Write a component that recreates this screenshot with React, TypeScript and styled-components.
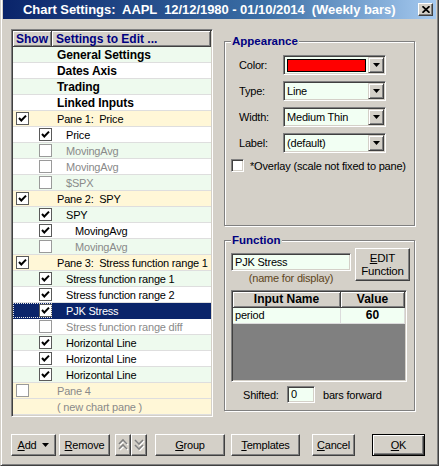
import React from "react";
import styled, { createGlobalStyle, css } from "styled-components";

const FACE = "#d4d0c8";
const SHADOW = "#808080";
const DARK = "#404040";
const GREEN = "#eefaee";
const YELLOW = "#fff7d7";
const MINT = "#f2fff3";
const NAVY = "#0a246a";

const Global = createGlobalStyle`
  html, body { margin: 0; padding: 0; background: ${FACE}; }
  body { font-family: "Liberation Sans", Arial, sans-serif; font-size: 11px; color: #000; letter-spacing: -0.2px; }
  * { box-sizing: border-box; }
`;

const Window = styled.div`
  width: 439px;
  height: 466px;
  background: ${FACE};
  border-left: 1px solid ${FACE};
  border-right: 1px solid ${DARK};
  border-bottom: 1px solid ${DARK};
  box-shadow: inset 1px 0 0 #fff, inset -1px -1px 0 ${SHADOW};
  padding: 0 2px 2px 2px;
  display: flex;
  flex-direction: column;
  overflow: hidden;
`;

const TitleBar = styled.div`
  height: 19px;
  flex: none;
  display: flex;
  align-items: center;
  padding-left: 20px;
  padding-right: 3px;
  background: linear-gradient(to right, #0a246a 0%, #3a6ea5 60%, #a6caf0 100%);
`;

const TitleText = styled.span`
  color: #fff;
  font-weight: bold;
  font-size: 13px;
  letter-spacing: -0.05px;
  white-space: pre;
`;

const CloseBtn = styled.div`
  margin-left: auto;
  width: 15px;
  height: 13px;
  background: ${FACE};
  border: 1px solid;
  border-color: #fff ${DARK} ${DARK} #fff;
  box-shadow: inset -1px -1px 0 ${SHADOW};
  display: flex;
  align-items: center;
  justify-content: center;
`;

const Body = styled.div`
  display: flex;
  padding: 10px 0 0 8px;
`;

const ListFrame = styled.div`
  width: 202px;
  height: 388px;
  border: 1px solid;
  border-color: ${SHADOW} #fff #fff ${SHADOW};
  box-shadow: inset 1px 1px 0 ${DARK}, inset -1px -1px 0 ${FACE};
  padding: 1px;
  background: #fff;
  display: flex;
  flex-direction: column;
`;

const HeadRow = styled.div`
  display: flex;
  height: 16px;
  flex: none;
  background: ${FACE};
`;

const HeadCell = styled.div<{ $w?: number; $pl: number }>`
  ${(p) => (p.$w ? `width: ${p.$w}px; flex: none;` : "flex: 1;")}
  height: 16px;
  padding-left: ${(p) => p.$pl}px;
  border-right: 1px solid ${DARK};
  border-bottom: 1px solid ${DARK};
  box-shadow: inset 1px 1px 0 #fff, inset -1px -1px 0 ${SHADOW};
  color: #000080;
  font-weight: bold;
  font-size: 12px;
  letter-spacing: 0;
  line-height: 16px;
  white-space: pre;
`;

type Bg = "g" | "w" | "y" | "sel";
const bgColor: Record<Bg, string> = { g: GREEN, w: "#fff", y: YELLOW, sel: NAVY };

const Row = styled.div<{ $bg: Bg }>`
  display: flex;
  height: 16px;
  flex: none;
  background: ${(p) => bgColor[p.$bg]};
  border-bottom: 1px solid ${(p) => (p.$bg === "sel" ? NAVY : "#dedede")};
`;

const ShowCell = styled.div<{ $pl: number; $focus?: boolean }>`
  width: 39px;
  flex: none;
  display: flex;
  align-items: center;
  padding-left: ${(p) => p.$pl}px;
  ${(p) =>
    p.$focus &&
    css`
      outline: 1px dotted #e8e8e8;
      outline-offset: -1px;
    `}
`;

type Kind = "bold" | "pane" | "item" | "sub";
const indent: Record<Kind, number> = { bold: 5, pane: 5, item: 14, sub: 23 };

const Label = styled.div<{ $kind: Kind; $dim?: boolean; $sel?: boolean }>`
  padding-left: ${(p) => indent[p.$kind]}px;
  line-height: 16px;
  white-space: pre;
  font-weight: ${(p) => (p.$kind === "bold" ? "bold" : "normal")};
  font-size: ${(p) => (p.$kind === "bold" ? "12px" : "11px")};
  letter-spacing: ${(p) => (p.$kind === "bold" ? "-0.1px" : "-0.2px")};
  color: ${(p) => (p.$sel ? "#fff" : p.$dim ? "#8a8a8a" : "#000")};
`;

const Box = styled.div<{ $dim?: boolean; $sunken?: boolean }>`
  width: 13px;
  height: 13px;
  flex: none;
  background: #fff;
  display: flex;
  align-items: center;
  justify-content: center;
  ${(p) =>
    p.$sunken
      ? css`
          border: 1px solid;
          border-color: ${SHADOW} #fff #fff ${SHADOW};
          box-shadow: inset 1px 1px 0 ${DARK}, inset -1px -1px 0 ${FACE};
        `
      : css`
          border: 1px solid ${p.$dim ? "#9a9a9a" : "#5a5a5a"};
        `}
`;

const Check = ({ checked, dim, sunken }: { checked?: boolean; dim?: boolean; sunken?: boolean }) => (
  <Box $dim={dim} $sunken={sunken}>
    {checked && (
      <svg width="9" height="9" viewBox="0 0 9 9">
        <polyline points="1,4 3.3,6.5 8,1.6" fill="none" stroke="#000" strokeWidth="2" />
      </svg>
    )}
  </Box>
);

type Item = { label: string; kind: Kind; bg: Bg; checked?: boolean; dim?: boolean; box?: boolean };

const items: Item[] = [
  { label: "General Settings", kind: "bold", bg: "g" },
  { label: "Dates Axis", kind: "bold", bg: "w" },
  { label: "Trading", kind: "bold", bg: "g" },
  { label: "Linked Inputs", kind: "bold", bg: "w" },
  { label: "Pane 1:  Price", kind: "pane", bg: "y", checked: true, box: true },
  { label: "Price", kind: "item", bg: "w", checked: true, box: true },
  { label: "MovingAvg", kind: "item", bg: "g", dim: true, box: true },
  { label: "MovingAvg", kind: "item", bg: "w", dim: true, box: true },
  { label: "$SPX", kind: "item", bg: "g", dim: true, box: true },
  { label: "Pane 2:  SPY", kind: "pane", bg: "y", checked: true, box: true },
  { label: "SPY", kind: "item", bg: "g", checked: true, box: true },
  { label: "MovingAvg", kind: "sub", bg: "w", checked: true, box: true },
  { label: "MovingAvg", kind: "sub", bg: "g", dim: true, box: true },
  { label: "Pane 3:  Stress function range 1", kind: "pane", bg: "y", checked: true, box: true },
  { label: "Stress function range 1", kind: "item", bg: "g", checked: true, box: true },
  { label: "Stress function range 2", kind: "item", bg: "w", checked: true, box: true },
  { label: "PJK Stress", kind: "item", bg: "sel", checked: true, box: true },
  { label: "Stress function range diff", kind: "item", bg: "w", dim: true, box: true },
  { label: "Horizontal Line", kind: "item", bg: "g", checked: true, box: true },
  { label: "Horizontal Line", kind: "item", bg: "w", checked: true, box: true },
  { label: "Horizontal Line", kind: "item", bg: "g", checked: true, box: true },
  { label: "Pane 4", kind: "pane", bg: "y", dim: true, box: true },
  { label: "( new chart pane )", kind: "pane", bg: "y", dim: true },
];

const RightCol = styled.div`
  width: 191px;
  margin-left: 11px;
  padding-top: 6px;
  display: flex;
  flex-direction: column;
`;

const Group = styled.fieldset<{ $h: number; $mt: number }>`
  margin: ${(p) => p.$mt}px 0 0 0;
  padding: 0;
  min-width: 0;
  height: ${(p) => p.$h}px;
  border: 1px solid ${SHADOW};
  box-shadow: 1px 1px 0 #fff, inset 1px 1px 0 #fff;
`;

const Legend = styled.legend`
  margin-left: 6px;
  padding: 0 1px;
  background: ${FACE};
  color: #000080;
  font-weight: bold;
  font-size: 11.5px;
  letter-spacing: 0;
  line-height: 13px;
`;

const FieldGrid = styled.div`
  display: grid;
  grid-template-columns: 44px 103px;
  grid-auto-rows: 20px;
  row-gap: 6px;
  padding: 7px 0 0 14px;
  align-items: center;
`;

const Combo = styled.div`
  height: 20px;
  display: flex;
  align-items: center;
  border: 1px solid;
  border-color: ${SHADOW} #fff #fff ${SHADOW};
  box-shadow: inset 1px 1px 0 ${DARK}, inset -1px -1px 0 ${FACE};
  background: ${MINT};
  padding: 1px;
`;

const ComboText = styled.span`
  flex: 1;
  padding-left: 2px;
  line-height: 16px;
`;

const Swatch = styled.span`
  flex: 1;
  height: 13px;
  margin: 0 2px 0 2px;
  background: #ff0000;
  border: 1px solid #000;
`;

const DropBtn = styled.div`
  width: 16px;
  height: 16px;
  flex: none;
  background: ${FACE};
  border: 1px solid;
  border-color: ${FACE} ${DARK} ${DARK} ${FACE};
  box-shadow: inset 1px 1px 0 #fff, inset -1px -1px 0 ${SHADOW};
  display: flex;
  align-items: center;
  justify-content: center;
`;

const Arrow = () => (
  <svg width="7" height="4" viewBox="0 0 7 4">
    <polygon points="0,0 7,0 3.5,4" fill="#000" />
  </svg>
);

const ComboBox = ({ children }: { children: React.ReactNode }) => (
  <Combo>
    {children}
    <DropBtn>
      <Arrow />
    </DropBtn>
  </Combo>
);

const CheckRow = styled.div`
  display: flex;
  align-items: center;
  gap: 6px;
  margin: 6px 0 0 6px;
  white-space: pre;
`;

const FuncBody = styled.div`
  padding: 1px 0 0 6px;
  display: flex;
  flex-direction: column;
`;

const TopRow = styled.div`
  display: flex;
  align-items: flex-start;
  gap: 4px;
`;

const NameCol = styled.div`
  width: 120px;
  margin-top: 5px;
  display: flex;
  flex-direction: column;
  align-items: center;
`;

const TextBox = styled.div<{ $w: number; $h: number }>`
  width: ${(p) => p.$w}px;
  height: ${(p) => p.$h}px;
  border: 1px solid;
  border-color: ${SHADOW} #fff #fff ${SHADOW};
  box-shadow: inset 1px 1px 0 ${DARK}, inset -1px -1px 0 ${FACE};
  background: ${MINT};
  padding: 0 3px;
  line-height: ${(p) => p.$h - 2}px;
`;

const Caption = styled.div`
  margin-top: 1px;
  line-height: 13px;
  color: #5e4520;
`;

const Button = styled.button<{ $w: number; $h?: number; $def?: boolean }>`
  width: ${(p) => p.$w}px;
  height: ${(p) => p.$h ?? 22}px;
  flex: none;
  padding: 0;
  margin: 0;
  font-family: "Liberation Sans", Arial, sans-serif;
  font-size: 11px;
  letter-spacing: -0.2px;
  color: #000;
  background: ${FACE};
  border: 1px solid;
  border-color: #fff ${DARK} ${DARK} #fff;
  box-shadow: inset -1px -1px 0 ${SHADOW};
  display: flex;
  align-items: center;
  justify-content: center;
  gap: 6px;
  line-height: 13px;
  ${(p) =>
    p.$def &&
    css`
      border-color: #000;
      box-shadow: inset 1px 1px 0 #fff, inset -1px -1px 0 ${DARK}, inset -2px -2px 0 ${SHADOW};
    `}
`;

const EditLabel = styled.span`
  display: flex;
  flex-direction: column;
  align-items: center;
  line-height: 13px;
  font-size: 11.5px;
`;

const DataGrid = styled.div`
  margin-top: 5px;
  width: 176px;
  height: 92px;
  border: 1px solid;
  border-color: ${SHADOW} #fff #fff ${SHADOW};
  box-shadow: inset 1px 1px 0 ${DARK}, inset -1px -1px 0 ${FACE};
  padding: 1px;
  background: ${SHADOW};
  display: flex;
  flex-direction: column;
`;

const GridRow = styled.div<{ $head?: boolean }>`
  display: grid;
  grid-template-columns: 108px 1fr;
  height: 16px;
  background: ${(p) => (p.$head ? FACE : MINT)};
`;

const GridCell = styled.div<{ $head?: boolean; $center?: boolean; $bold?: boolean }>`
  line-height: 15px;
  padding-left: ${(p) => (p.$center ? 0 : 2)}px;
  text-align: ${(p) => (p.$center ? "center" : "left")};
  font-weight: ${(p) => (p.$bold ? "bold" : "normal")};
  font-size: ${(p) => (p.$bold ? "12px" : "11px")};
  letter-spacing: ${(p) => (p.$bold ? "0" : "-0.2px")};
  ${(p) =>
    p.$head
      ? css`
          border-right: 1px solid ${DARK};
          border-bottom: 1px solid ${DARK};
          box-shadow: inset 1px 1px 0 #fff, inset -1px -1px 0 ${SHADOW};
        `
      : css`
          border-right: 1px solid #dcdcdc;
          border-bottom: 1px solid #dcdcdc;
        `}
`;

const ShiftRow = styled.div`
  display: flex;
  align-items: center;
  margin: 4px 0 0 12px;
`;

const ShiftLabel = styled.span`
  width: 44px;
`;

const ShiftUnit = styled.span`
  margin-left: 8px;
`;

const ButtonBar = styled.div`
  display: flex;
  align-items: center;
  padding-left: 8px;
  margin-top: 17px;
`;

const Gap = styled.div<{ $w: number }>`
  width: ${(p) => p.$w}px;
  flex: none;
`;

const ChevBtn = styled(Button)`
  gap: 0;
`;

const Chevrons = ({ up }: { up?: boolean }) => {
  const pts = (y: number) => (up ? `2,${y + 4} 6,${y} 10,${y + 4}` : `2,${y} 6,${y + 4} 10,${y}`);
  return (
    <svg width="12" height="14" viewBox="0 0 12 14">
      {[2, 7].map((y) => (
        <g key={y}>
          <polyline points={pts(y + 1)} transform="translate(1,0)" fill="none" stroke="#fff" strokeWidth="1.6" />
          <polyline points={pts(y)} fill="none" stroke={SHADOW} strokeWidth="1.6" />
        </g>
      ))}
    </svg>
  );
};

export default function App() {
  return (
    <>
      <Global />
      <Window>
        <TitleBar>
          <TitleText>{"Chart Settings:  AAPL  12/12/1980 - 01/10/2014  (Weekly bars)"}</TitleText>
          <CloseBtn>
            <svg width="8" height="7" viewBox="0 0 8 7">
              <path d="M0.5 0.2 L7.5 6.8 M7.5 0.2 L0.5 6.8" stroke="#000" strokeWidth="1.7" />
            </svg>
          </CloseBtn>
        </TitleBar>
        <Body>
          <ListFrame>
            <HeadRow>
              <HeadCell $w={39} $pl={3}>Show</HeadCell>
              <HeadCell $pl={4}>Settings to Edit ...</HeadCell>
            </HeadRow>
            {items.map((it, i) => (
              <Row key={i} $bg={it.bg}>
                <ShowCell $pl={it.kind === "pane" ? 3 : 26} $focus={it.bg === "sel"}>
                  {it.box && <Check checked={it.checked} dim={it.dim} />}
                </ShowCell>
                <Label $kind={it.kind} $dim={it.dim} $sel={it.bg === "sel"}>
                  {it.label}
                </Label>
              </Row>
            ))}
          </ListFrame>
          <RightCol>
            <Group $h={191} $mt={0}>
              <Legend>Appearance</Legend>
              <FieldGrid>
                <span>Color:</span>
                <ComboBox>
                  <Swatch />
                </ComboBox>
                <span>Type:</span>
                <ComboBox>
                  <ComboText>Line</ComboText>
                </ComboBox>
                <span>Width:</span>
                <ComboBox>
                  <ComboText>Medium Thin</ComboText>
                </ComboBox>
                <span>Label:</span>
                <ComboBox>
                  <ComboText>(default)</ComboText>
                </ComboBox>
              </FieldGrid>
              <CheckRow>
                <Check sunken />
                <span>*Overlay (scale not fixed to pane)</span>
              </CheckRow>
            </Group>
            <Group $h={177} $mt={8}>
              <Legend>Function</Legend>
              <FuncBody>
                <TopRow>
                  <NameCol>
                    <TextBox $w={120} $h={18}>PJK Stress</TextBox>
                    <Caption>(name for display)</Caption>
                  </NameCol>
                  <Button $w={55} $h={33}>
                    <EditLabel>
                      <span>
                        <u>E</u>DIT
                      </span>
                      <span>Function</span>
                    </EditLabel>
                  </Button>
                </TopRow>
                <DataGrid>
                  <GridRow $head>
                    <GridCell $head $center $bold>Input Name</GridCell>
                    <GridCell $head $center $bold>Value</GridCell>
                  </GridRow>
                  <GridRow>
                    <GridCell>period</GridCell>
                    <GridCell $center $bold>60</GridCell>
                  </GridRow>
                </DataGrid>
                <ShiftRow>
                  <ShiftLabel>Shifted:</ShiftLabel>
                  <TextBox $w={28} $h={17}>0</TextBox>
                  <ShiftUnit>bars forward</ShiftUnit>
                </ShiftRow>
              </FuncBody>
            </Group>
          </RightCol>
        </Body>
        <ButtonBar>
          <Button $w={45}>
            <span>
              <u>A</u>dd
            </span>
            <Arrow />
          </Button>
          <Gap $w={3} />
          <Button $w={51}>
            <span>
              <u>R</u>emove
            </span>
          </Button>
          <Gap $w={5} />
          <ChevBtn $w={16}>
            <Chevrons up />
          </ChevBtn>
          <ChevBtn $w={16}>
            <Chevrons />
          </ChevBtn>
          <Gap $w={8} />
          <Button $w={70}>
            <span>
              <u>G</u>roup
            </span>
          </Button>
          <Gap $w={6} />
          <Button $w={69}>
            <span>
              <u>T</u>emplates
            </span>
          </Button>
          <Gap $w={12} />
          <Button $w={43}>
            <span>
              <u>C</u>ancel
            </span>
          </Button>
          <Gap $w={17} />
          <Button $w={53} $def>
            <span>
              <u>O</u>K
            </span>
          </Button>
        </ButtonBar>
      </Window>
    </>
  );
}
